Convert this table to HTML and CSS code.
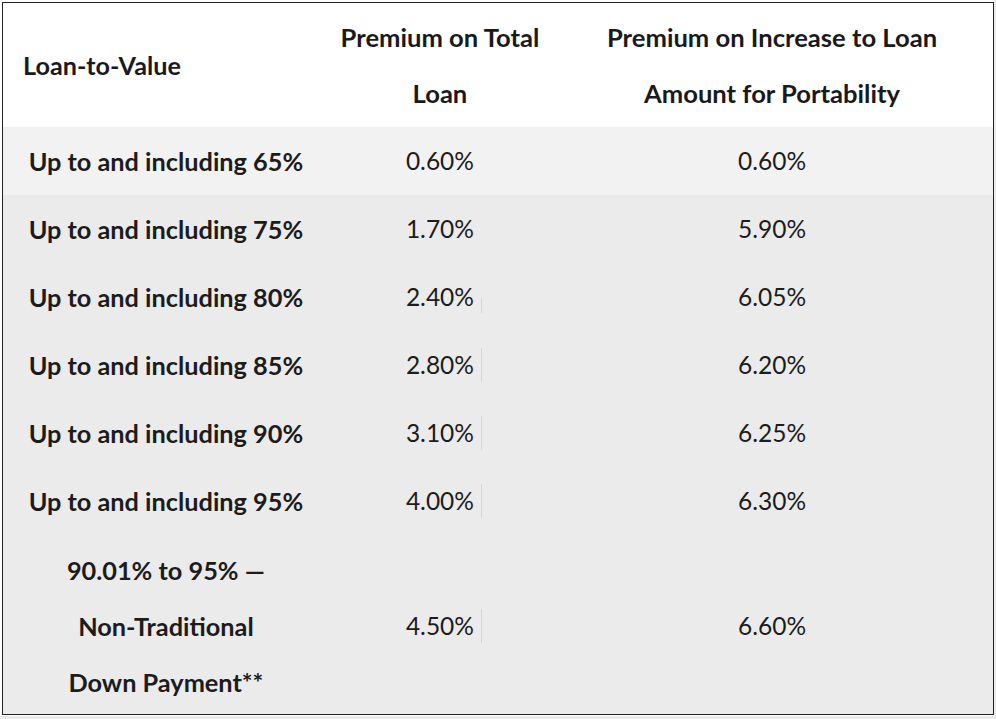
FILE: index.html
```html
<!DOCTYPE html>
<html lang="en">
<head>
<meta charset="utf-8">
<title>Premium table</title>
<link rel="stylesheet" href="styles.css">
</head>
<body>
<div class="frame">
  <table class="premiums">
    <colgroup>
      <col class="c1">
      <col class="c2">
      <col class="c3">
    </colgroup>
    <thead>
      <tr>
        <th class="head-left">Loan-to-Value</th>
        <th>Premium on Total<br>Loan</th>
        <th>Premium on Increase to Loan<br>Amount for Portability</th>
      </tr>
    </thead>
    <tbody>
      <tr class="first">
        <td class="label">Up to and including 65%</td>
        <td><span class="val">0.60%</span></td>
        <td>0.60%</td>
      </tr>
      <tr>
        <td class="label">Up to and including 75%</td>
        <td><span class="val">1.70%</span></td>
        <td>5.90%</td>
      </tr>
      <tr>
        <td class="label">Up to and including 80%</td>
        <td><span class="val caret caret-half">2.40%</span></td>
        <td>6.05%</td>
      </tr>
      <tr>
        <td class="label">Up to and including 85%</td>
        <td><span class="val caret">2.80%</span></td>
        <td>6.20%</td>
      </tr>
      <tr>
        <td class="label">Up to and including 90%</td>
        <td><span class="val caret">3.10%</span></td>
        <td>6.25%</td>
      </tr>
      <tr>
        <td class="label">Up to and including 95%</td>
        <td><span class="val caret">4.00%</span></td>
        <td>6.30%</td>
      </tr>
      <tr class="last">
        <td class="label">90.01% to 95% —<br>Non-Traditional<br>Down Payment**</td>
        <td><span class="val caret">4.50%</span></td>
        <td>6.60%</td>
      </tr>
    </tbody>
  </table>
</div>
</body>
</html>
```

FILE: styles.css
```css
html {
  background: #ebebeb;
}
body {
  margin: 0;
}
.frame {
  width: 994px;
  height: 716px;
  box-sizing: border-box;
  padding: 2px 0 0 2px;
  background: #ffffff;
}
.premiums {
  width: 992px;
  border: 1px solid #222222;
  border-collapse: collapse;
  border-spacing: 0;
  font-family: Lato, "Open Sans", sans-serif;
  color: #1c1c1c;
  table-layout: fixed;
}
.premiums .c1 { width: 326px; }
.premiums .c2 { width: 222px; }
.premiums .c3 { width: 442px; }

.premiums th {
  background: #ffffff;
  font-weight: 700;
  font-size: 25.6px;
  line-height: 56px;
  padding: 6px 0 6px;
  text-align: center;
  vertical-align: middle;
  color: #1a1a1a;
}
.premiums th.head-left {
  text-align: left;
  padding-left: 20px;
  font-size: 25.2px;
}
.premiums td {
  background: #ebebeb;
  font-size: 24.5px;
  line-height: 56px;
  padding: 6px 0;
  text-align: center;
  vertical-align: middle;
}
.premiums tr.first td {
  background: #f2f2f2;
}
.premiums td.label {
  font-weight: 700;
  font-size: 25.3px;
}
.premiums tr.last td {
  padding: 7px 0 4px;
}
.val {
  position: relative;
  display: inline-block;
  line-height: 56px;
}
.caret::after {
  content: "";
  position: absolute;
  left: calc(100% + 7px);
  top: 11px;
  height: 34px;
  border-left: 1px solid #c8d6f0;
}
.caret-half::after {
  top: 29px;
  height: 15px;
}
```
